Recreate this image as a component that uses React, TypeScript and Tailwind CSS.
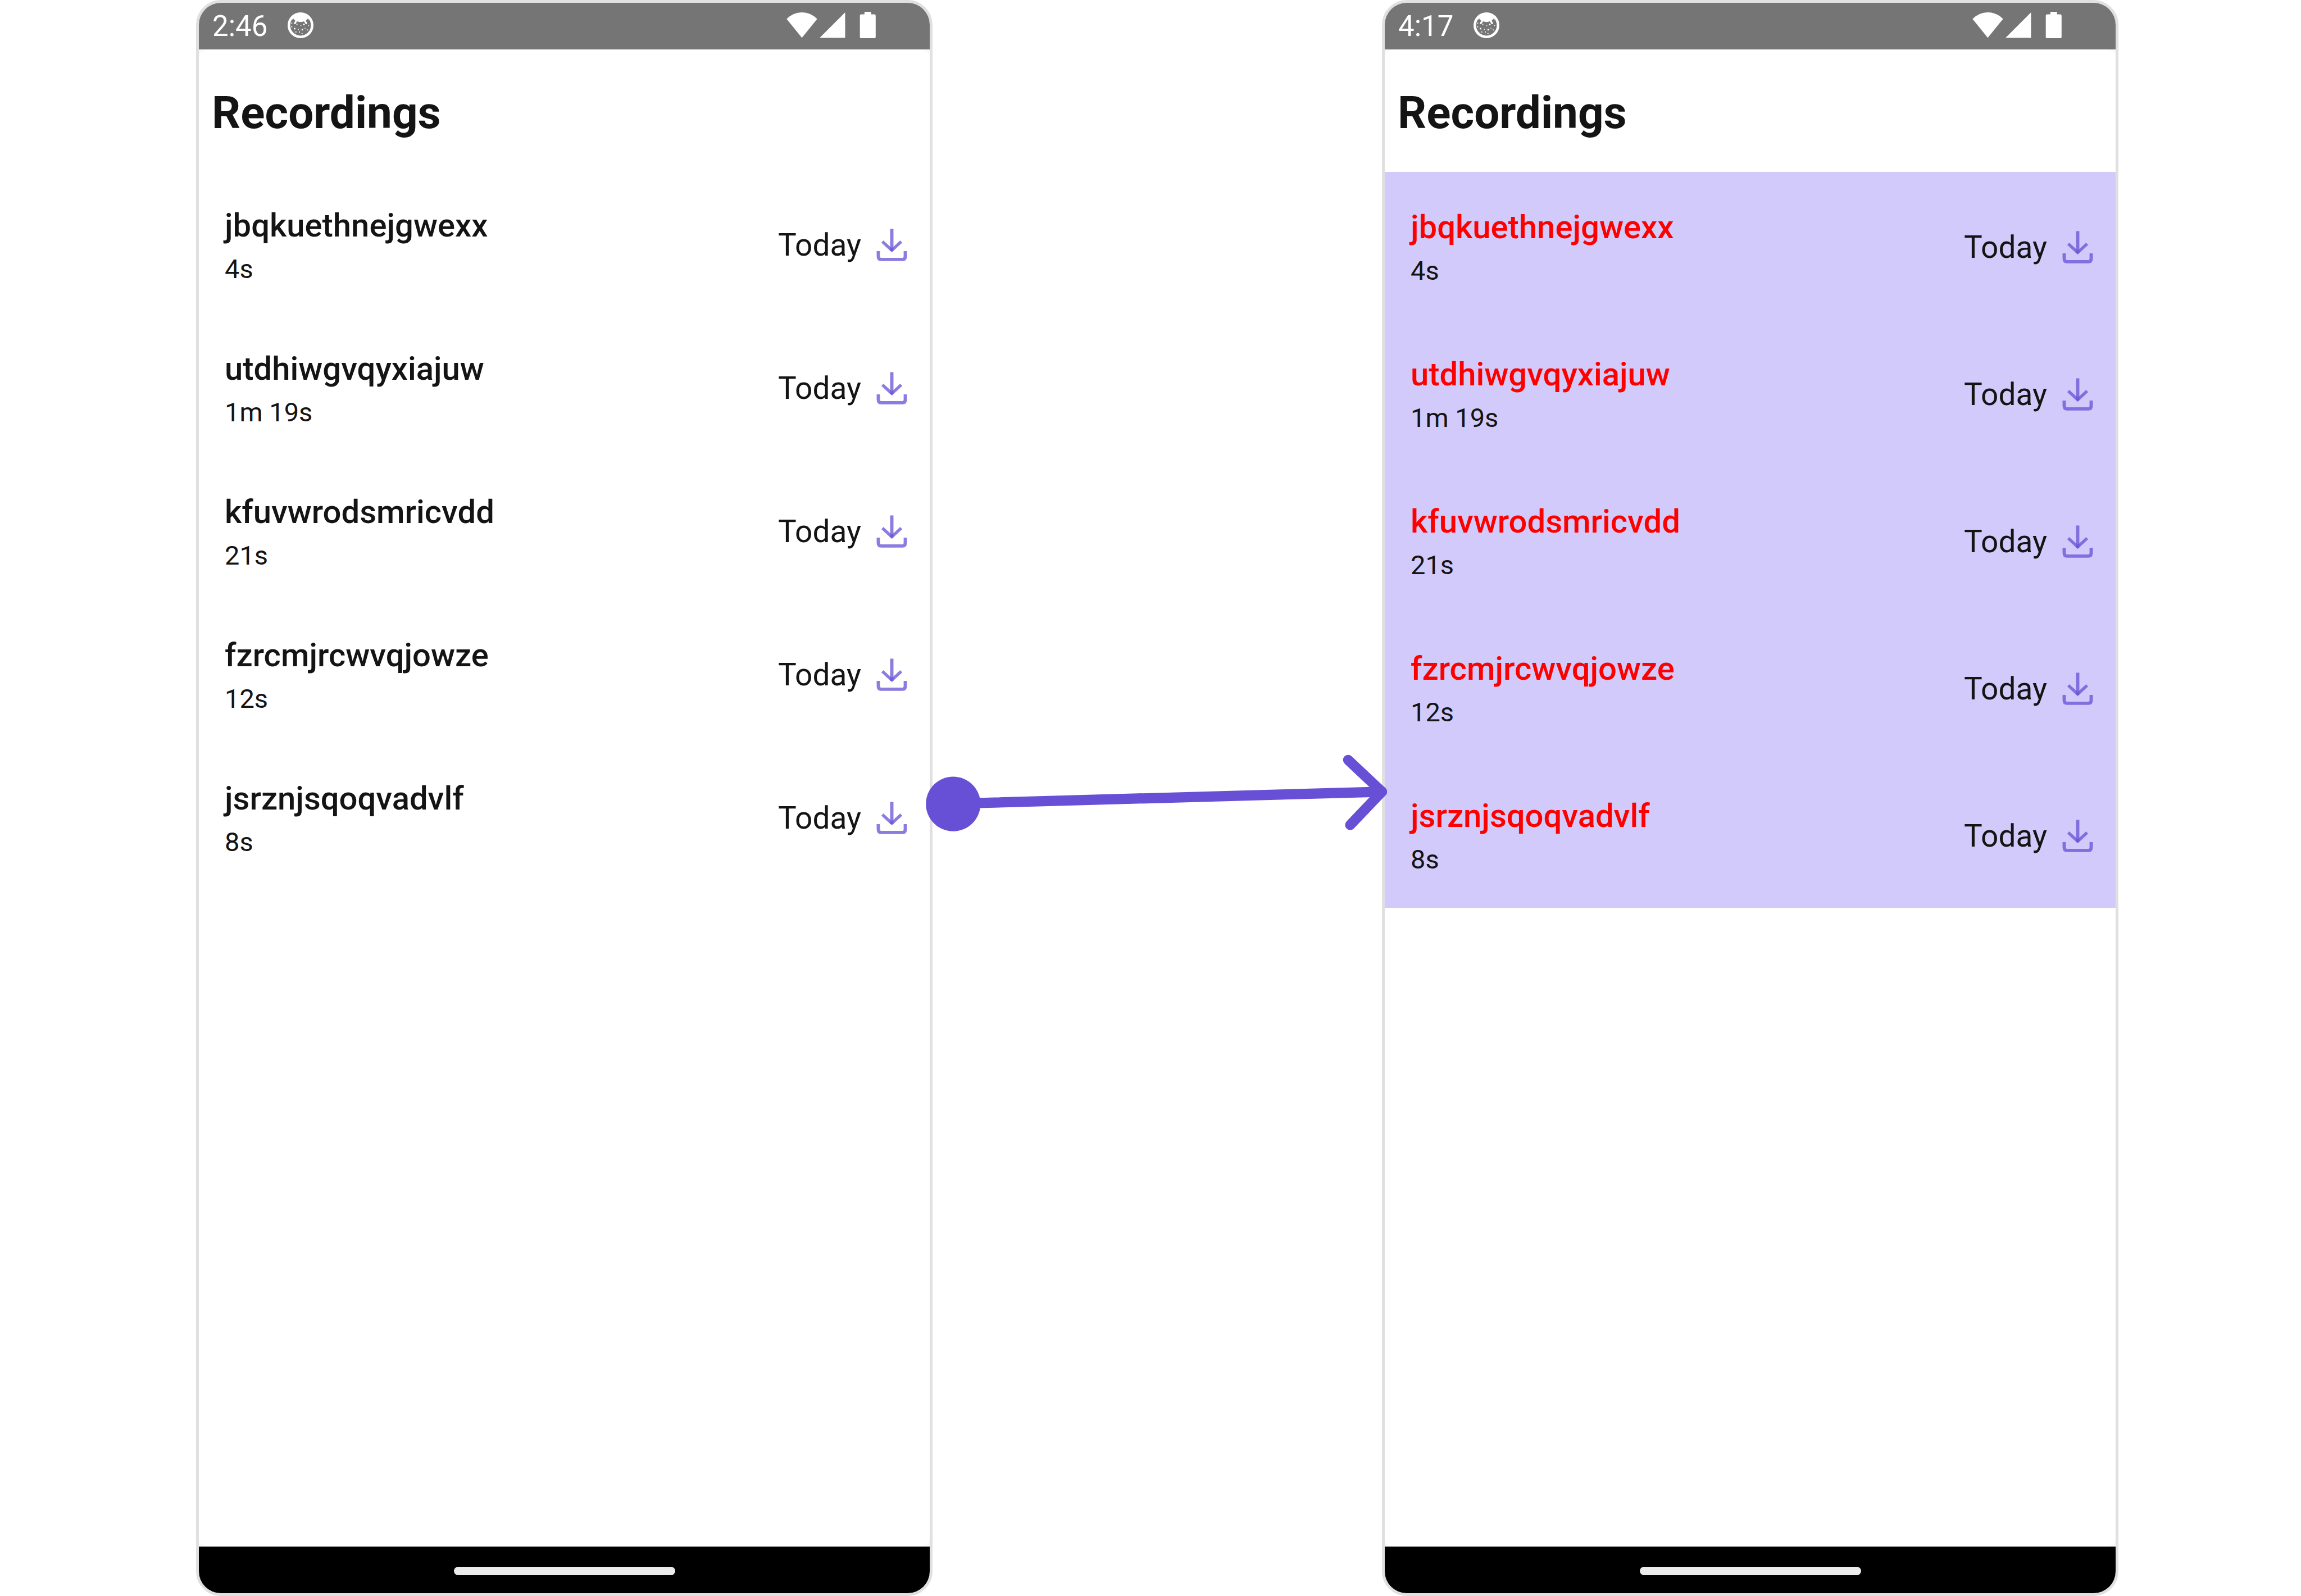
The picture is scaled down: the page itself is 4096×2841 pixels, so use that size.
const recordings = [
  { name: "jbqkuethnejgwexx", duration: "4s" },
  { name: "utdhiwgvqyxiajuw", duration: "1m 19s" },
  { name: "kfuvwrodsmricvdd", duration: "21s" },
  { name: "fzrcmjrcwvqjowze", duration: "12s" },
  { name: "jsrznjsqoqvadvlf", duration: "8s" },
];

function NotificationIcon() {
  return (
    <svg viewBox="0 0 50 50" className="h-[46px] w-[46px]" aria-hidden="true">
      <circle cx="25" cy="25" r="22.5" fill="none" stroke="#fff" strokeWidth="5" />
      <path d="M9 14 L11 12 Q13 16 18 17.500 Q25 20 32 17.500 Q37 16 39 12 L41 14 L44 9 Q36 1 25 1 Q14 1 6 9 Z" fill="#fff" />
      <path d="M16.500 17 L14 21 M33.500 17 L36 21" stroke="#fff" strokeWidth="3.500" strokeLinecap="round" />
      <g fill="#fff">
        <rect x="12" y="30" width="3" height="3" />
        <rect x="27" y="32" width="3" height="3" />
        <rect x="30" y="22" width="3" height="3" />
        <rect x="7" y="20" width="2" height="2" />
        <rect x="7" y="27" width="2" height="2" />
        <rect x="17" y="22" width="2" height="2" />
        <rect x="25" y="25" width="1.5" height="1.5" />
        <rect x="20" y="32" width="1.5" height="2" />
        <rect x="22" y="37" width="2" height="2" />
        <rect x="15" y="37" width="2" height="2" />
        <rect x="27" y="40" width="2" height="1.5" />
        <rect x="37" y="33" width="2" height="2" />
        <rect x="40" y="25" width="1.5" height="1.5" />
        <rect x="33" y="30" width="1.5" height="1.5" />
      </g>
    </svg>
  );
}

function SystemIcons() {
  return (
    <svg viewBox="0 0 176 53" className="h-[48px] w-[160px]" fill="#fff" aria-hidden="true">
      <path d="M0 14 Q13 1 30 1 Q47 1 60 14 L30 51 Z" />
      <path d="M115 1 V51 H65 Z" />
      <path d="M153 0 H166 V5 H172 Q175 5 175 8 V49 Q175 52 172 52 H147 Q144 52 144 49 V8 Q144 5 147 5 H153 Z" />
    </svg>
  );
}

function DownloadIcon() {
  return (
    <svg
      viewBox="0 0 60 64"
      className="h-[58px] w-[55px]"
      fill="none"
      stroke="#6750d6"
      strokeOpacity="0.75"
      strokeWidth="6.5"
      aria-hidden="true"
    >
      <path d="M30 0.500 V44" />
      <path d="M11.500 25.500 L30 42.500 L48.500 25.500" strokeWidth="6" />
      <path d="M3.500 44 V54 Q3.500 60.500 9 60.500 H51 Q56.500 60.500 56.500 54 V44" />
    </svg>
  );
}

function Phone({ time, highlighted }: { time: string; highlighted: boolean }) {
  return (
    <section className="flex min-h-screen flex-col overflow-hidden rounded-[44px] border-[5px] border-[#e0e0e0] bg-[#fafafa]">
      <header className="flex h-[83px] shrink-0 items-center bg-[#757575] pr-[95px] pl-[24px] text-white">
        <span className="text-[51px] leading-[60px]">{time}</span>
        <span className="ml-[36px] pb-1">
          <NotificationIcon />
        </span>
        <span className="ml-auto pb-1">
          <SystemIcons />
        </span>
      </header>
      <main className="flex grow flex-col overflow-hidden rounded-[20px/13px] bg-white">
        <h1 className="h-[218px] shrink-0 pt-[66px] pl-[23px] text-[80px] leading-[94px] font-bold">Recordings</h1>
        <ul className={highlighted ? "bg-[#d2cafa]" : "bg-white"}>
          {recordings.map((r) => (
            <li
              key={r.name}
              className={
                highlighted
                  ? "flex h-[262px] items-center justify-between pr-[40px] pl-[46px]"
                  : "flex h-[255px] items-center justify-between pr-[40px] pl-[46px]"
              }
            >
              <div>
                <h2
                  className={
                    highlighted
                      ? "text-[58px] leading-[90px] font-medium text-[#ff0000]"
                      : "text-[58px] leading-[90px] font-medium"
                  }
                >
                  {r.name}
                </h2>
                <p className="text-[47px] leading-[66px]">{r.duration}</p>
              </div>
              <div className="flex items-center gap-[27px] pt-[5px]">
                <span className="text-[55px] leading-[64px]">Today</span>
                <button type="button" aria-label={"Download " + r.name}>
                  <DownloadIcon />
                </button>
              </div>
            </li>
          ))}
        </ul>
      </main>
      <footer className="flex h-[83px] shrink-0 items-center justify-center bg-black pt-1">
        <div className="h-[15px] w-[394px] rounded-full bg-[#ebebeb]" />
      </footer>
    </section>
  );
}

function Connector() {
  return (
    <div className="relative z-10 pt-[1320px]">
      <svg
        viewBox="1823 1450 878 200"
        className="w-full overflow-visible"
        fill="none"
        stroke="#6750d6"
        strokeWidth="20"
        strokeLinecap="round"
        strokeLinejoin="round"
        aria-hidden="true"
      >
        <circle cx="1863.300" cy="1572" r="53.300" fill="#6750d6" stroke="none" />
        <path d="M1863 1571.500 L2701 1548" />
        <path d="M2635 1486 L2701 1548 L2639 1613" />
      </svg>
    </div>
  );
}

export default function App() {
  return (
    <div className="grid min-h-screen grid-cols-[349fr_1311fr_800fr_1311fr_325fr] bg-white font-['Roboto',sans-serif] text-[#141414]">
      <div />
      <Phone time="2:46" highlighted={false} />
      <Connector />
      <Phone time="4:17" highlighted />
      <div />
    </div>
  );
}
